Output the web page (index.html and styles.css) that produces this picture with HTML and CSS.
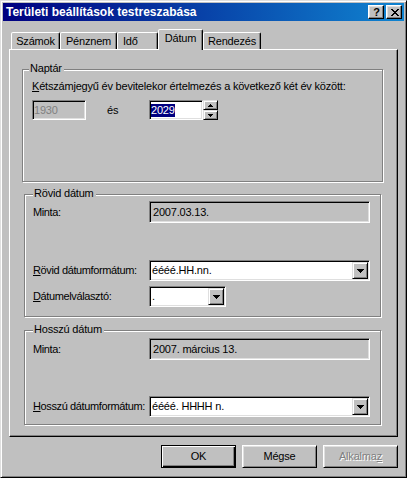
FILE: index.html
```html
<!DOCTYPE html>
<html lang="hu">
<head>
<meta charset="utf-8">
<title>Területi beállítások testreszabása</title>
<link rel="stylesheet" href="styles.css">
</head>
<body>
<div class="window">
  <div class="titlebar">
    <span class="title">Területi beállítások testreszabása</span>
    <div class="tbtns">
      <span class="tbtn help">?</span>
      <span class="tbtn close"><svg width="8" height="7" viewBox="0 0 8 7"><path d="M0 0h2v1H0zM6 0h2v1H6zM1 1h2v1H1zM5 1h2v1H5zM2 2h4v1H2zM3 3h2v1H3zM2 4h4v1H2zM1 5h2v1H1zM5 5h2v1H5zM0 6h2v1H0zM6 6h2v1H6z" fill="#000"/></svg></span>
    </div>
  </div>
  <div class="content">
    <div class="tabs">
      <div class="tab t1">Számok</div>
      <div class="tab t2">Pénznem</div>
      <div class="tab t3">Idő</div>
      <div class="tab t4 active">Dátum</div>
      <div class="tab t5">Rendezés</div>
    </div>
    <div class="panel">
      <div class="group cal">
        <span class="legend">Naptár</span>
        <div class="cal-label"><u>K</u>étszámjegyű év bevitelekor értelmezés a következő két év között:</div>
        <div class="cal-row">
          <div class="edit dis year">1930</div>
          <span class="es">és</span>
          <div class="edit year"><span class="sel">2029</span></div>
          <div class="spin">
            <span class="sb"><svg width="5" height="3" viewBox="0 0 5 3"><path d="M2 0h1v1h1v1h1v1H0V2h1V1h1z" fill="#000"/></svg></span>
            <span class="sb"><svg width="5" height="3" viewBox="0 0 5 3"><path d="M0 0h5v1H4v1H3v1H2V2H1V1H0z" fill="#000"/></svg></span>
          </div>
        </div>
      </div>

      <div class="group sub short">
        <span class="legend">Rövid dátum</span>
        <div class="row r-minta">
          <span class="lbl">Minta:</span>
          <div class="edit ro wide">2007.03.13.</div>
        </div>
        <div class="row r-fmt">
          <span class="lbl"><u>R</u>övid dátumformátum:</span>
          <div class="combo wide"><span class="ctext">éééé.HH.nn.</span><span class="dd"><svg width="7" height="4" viewBox="0 0 7 4"><path d="M0 0h7v1H6v1H5v1H4v1H3V3H2V2H1V1H0z" fill="#000"/></svg></span></div>
        </div>
        <div class="row r-sep">
          <span class="lbl"><u>D</u>átumelválasztó:</span>
          <div class="combo narrow"><span class="ctext">.</span><span class="dd"><svg width="7" height="4" viewBox="0 0 7 4"><path d="M0 0h7v1H6v1H5v1H4v1H3V3H2V2H1V1H0z" fill="#000"/></svg></span></div>
        </div>
      </div>

      <div class="group sub long">
        <span class="legend">Hosszú dátum</span>
        <div class="row r-minta">
          <span class="lbl">Minta:</span>
          <div class="edit ro wide">2007. március 13.</div>
        </div>
        <div class="row r-lfmt">
          <span class="lbl"><u>H</u>osszú dátumformátum:</span>
          <div class="combo wide"><span class="ctext">éééé. HHHH n.</span><span class="dd"><svg width="7" height="4" viewBox="0 0 7 4"><path d="M0 0h7v1H6v1H5v1H4v1H3V3H2V2H1V1H0z" fill="#000"/></svg></span></div>
        </div>
      </div>
    </div>
    <div class="buttons">
      <div class="btn default">OK</div>
      <div class="btn">Mégse</div>
      <div class="btn disabled">Alkalma<u>z</u></div>
    </div>
  </div>
</div>
</body>
</html>
```
FILE: styles.css
```css
* { box-sizing: border-box; }
html, body { margin: 0; padding: 0; }
body {
  width: 407px;
  height: 478px;
  overflow: hidden;
  background: #c0c0c0;
  font-family: "Liberation Sans", Arial, sans-serif;
  font-size: 11px;
  line-height: 13px;
  letter-spacing: -0.2px;
  color: #000;
}
u { text-decoration: underline; text-underline-offset: 1px; }

.window {
  width: 407px;
  height: 478px;
  border: 1px solid;
  border-color: #dfdfdf #000 #000 #dfdfdf;
  box-shadow: inset 1px 1px #fff, inset -1px -1px #808080;
  padding: 2px;
  background: #c0c0c0;
  display: flex;
  flex-direction: column;
}

.titlebar {
  height: 18px;
  flex: none;
  background: linear-gradient(to right, #000080, #1084d0);
  display: flex;
  align-items: center;
  padding: 0 2px 0 3px;
}
.title {
  flex: 1;
  color: #fff;
  font-weight: bold;
  font-size: 12px;
  line-height: 18px;
  letter-spacing: 0;
  white-space: nowrap;
}
.tbtns { display: flex; gap: 2px; }
.tbtn {
  width: 16px;
  height: 14px;
  background: #c0c0c0;
  border: 1px solid;
  border-color: #fff #000 #000 #fff;
  box-shadow: inset -1px -1px #808080, inset 1px 1px #dfdfdf;
  display: flex;
  align-items: center;
  justify-content: center;
}
.help {
  font-weight: bold;
  font-size: 11px;
  line-height: 12px;
  letter-spacing: 0;
  padding-left: 1px;
}
.close svg { display: block; margin-left: 1px; }

.content {
  padding: 8px 6px 0 6px;
  display: flex;
  flex-direction: column;
}

.tabs {
  display: flex;
  align-items: flex-end;
  height: 20px;
  padding-left: 2px;
}
.tab {
  height: 17px;
  border: 1px solid;
  border-bottom: none;
  border-color: #fff #000 transparent #fff;
  border-radius: 2px 2px 0 0;
  box-shadow: inset -1px 0 #808080;
  padding-top: 2px;
  text-align: center;
  background: #c0c0c0;
  white-space: nowrap;
}
.tab.active {
  height: 21px;
  margin-bottom: -1px;
  position: relative;
  z-index: 1;
  padding-top: 2px;
}
.t1 { width: 49px; }
.t2 { width: 57px; }
.t3 { width: 41px; text-align: left; padding-left: 5px; }
.t4 { width: 45px; }
.t5 { width: 58px; }

.panel {
  height: 388px;
  border: 1px solid;
  border-color: #fff #000 #000 #fff;
  box-shadow: inset -1px -1px #808080;
  padding: 19px 0 0 12px;
}

.group {
  position: relative;
  border: 1px solid #808080;
  box-shadow: inset 1px 1px #fff, 1px 1px #fff;
}
.legend {
  position: absolute;
  top: -8px;
  left: 6px;
  padding: 0 2px 0 1px;
  background: #c0c0c0;
  white-space: nowrap;
}
.sub .legend { left: 8px; }

.cal {
  width: 361px;
  height: 113px;
  padding: 10px 0 0 9px;
}
.cal-label { white-space: nowrap; }
.cal-row {
  display: flex;
  margin-top: 7px;
  height: 20px;
}
.es {
  width: 63px;
  padding-left: 21px;
  display: flex;
  align-items: center;
}
.year { width: 54px; }

.short {
  width: 357px;
  height: 123px;
  margin: 12px 0 0 2px;
  padding: 6px 0 0 8px;
}
.long {
  width: 357px;
  height: 95px;
  margin: 13px 0 0 2px;
  padding: 7px 0 0 8px;
}
.row { display: flex; align-items: center; }
.lbl { width: 116px; white-space: nowrap; letter-spacing: -0.38px; }
.r-minta { height: 22px; }
.r-fmt { height: 21px; margin-top: 37px; }
.r-sep { height: 21px; margin-top: 5px; }
.r-lfmt { height: 21px; margin-top: 36px; }

.edit {
  height: 100%;
  border: 1px solid;
  border-color: #808080 #fff #fff #808080;
  box-shadow: inset 1px 1px #000, inset -1px -1px #dfdfdf;
  background: #fff;
  padding-left: 1px;
  display: flex;
  align-items: center;
  white-space: nowrap;
  overflow: hidden;
}
.edit.dis { background: #c0c0c0; color: #808080; }
.edit.ro { background: #c0c0c0; padding-left: 3px; }
.wide { width: 221px; }
.narrow { width: 77px; }
.sel { background: #000080; color: #fff; }

.spin {
  width: 15px;
  height: 20px;
  display: flex;
  flex-direction: column;
}
.sb {
  flex: 1;
  background: #c0c0c0;
  border: 1px solid;
  border-color: #dfdfdf #000 #000 #dfdfdf;
  box-shadow: inset 1px 1px #fff, inset -1px -1px #808080;
  display: flex;
  align-items: center;
  justify-content: center;
}
.sb svg { display: block; }

.combo {
  height: 21px;
  display: flex;
  border: 1px solid;
  border-color: #808080 #fff #fff #808080;
  box-shadow: inset 1px 1px #000, inset -1px -1px #dfdfdf;
  background: #fff;
  padding: 1px;
}
.ctext {
  flex: 1;
  padding-left: 1px;
  display: flex;
  align-items: center;
  white-space: nowrap;
  overflow: hidden;
}
.dd {
  width: 16px;
  height: 17px;
  background: #c0c0c0;
  border: 1px solid;
  border-color: #dfdfdf #000 #000 #dfdfdf;
  box-shadow: inset 1px 1px #fff, inset -1px -1px #808080;
  display: flex;
  align-items: center;
  justify-content: center;
}
.dd svg { display: block; }

.buttons {
  display: flex;
  justify-content: flex-end;
  gap: 6px;
  margin-top: 8px;
}
.btn {
  width: 75px;
  height: 23px;
  border: 1px solid;
  border-color: #fff #000 #000 #fff;
  box-shadow: inset 1px 1px #dfdfdf, inset -1px -1px #808080;
  display: flex;
  align-items: center;
  justify-content: center;
  background: #c0c0c0;
}
.btn.default {
  border-color: #000;
  box-shadow: inset 1px 1px #fff, inset -1px -1px #000, inset -2px -2px #808080;
}
.btn.disabled { color: #808080; text-shadow: 1px 1px #fff; }
```
